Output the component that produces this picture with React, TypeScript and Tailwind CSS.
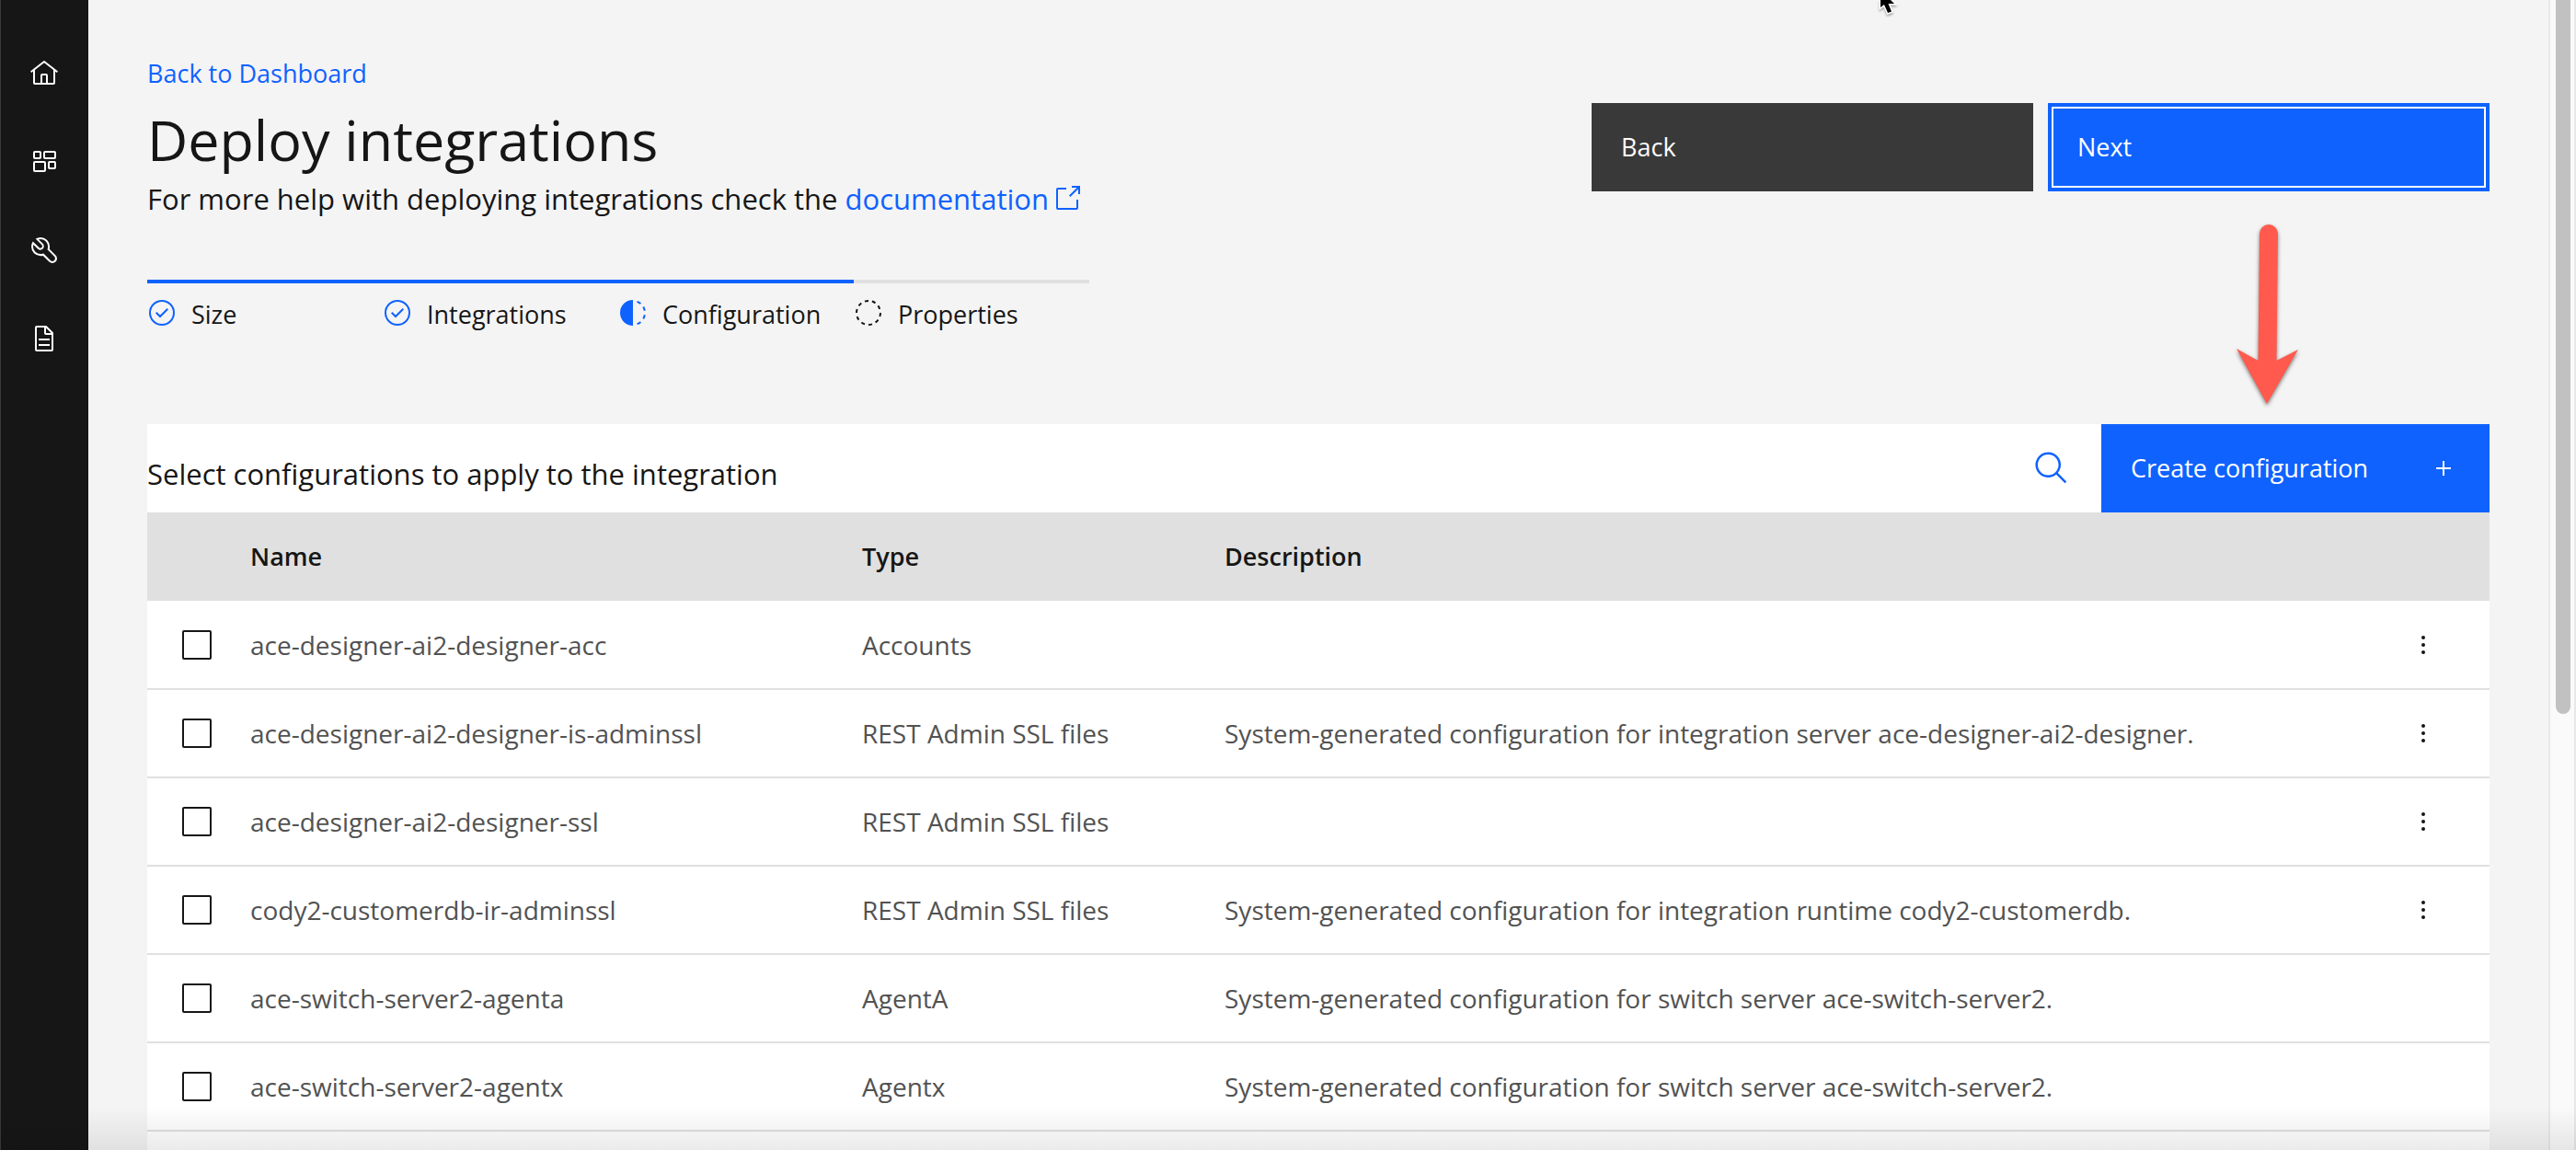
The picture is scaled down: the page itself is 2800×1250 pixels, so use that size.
import React from 'react';

const steps = [
  { label: 'Size', state: 'complete' },
  { label: 'Integrations', state: 'complete' },
  { label: 'Configuration', state: 'current' },
  { label: 'Properties', state: 'todo' },
];

const rows = [
  { name: 'ace-designer-ai2-designer-acc', type: 'Accounts', description: '', menu: true },
  { name: 'ace-designer-ai2-designer-is-adminssl', type: 'REST Admin SSL files', description: 'System-generated configuration for integration server ace-designer-ai2-designer.', menu: true },
  { name: 'ace-designer-ai2-designer-ssl', type: 'REST Admin SSL files', description: '', menu: true },
  { name: 'cody2-customerdb-ir-adminssl', type: 'REST Admin SSL files', description: 'System-generated configuration for integration runtime cody2-customerdb.', menu: true },
  { name: 'ace-switch-server2-agenta', type: 'AgentA', description: 'System-generated configuration for switch server ace-switch-server2.', menu: false },
  { name: 'ace-switch-server2-agentx', type: 'Agentx', description: 'System-generated configuration for switch server ace-switch-server2.', menu: false },
];

const navItems = [
  {
    label: 'Home',
    d: 'M16.612 2.214a1.01 1.01 0 0 0-1.242 0L1 13.419l1.243 1.572L4 13.621V26a2.004 2.004 0 0 0 2 2h20a2.004 2.004 0 0 0 2-2V13.63L29.757 15 31 13.428ZM18 26h-4v-8h4Zm2 0v-8a2.002 2.002 0 0 0-2-2h-4a2.002 2.002 0 0 0-2 2v8H6V12.062l10-7.79 10 7.8V26Z',
  },
  {
    label: 'Dashboard',
    d: 'M11 13H6a2 2 0 0 1-2-2V6a2 2 0 0 1 2-2h5a2 2 0 0 1 2 2v5a2 2 0 0 1-2 2ZM6 6v5h5V6ZM27 13H17a2 2 0 0 1-2-2V6a2 2 0 0 1 2-2h10a2 2 0 0 1 2 2v5a2 2 0 0 1-2 2ZM17 6v5h10V6ZM16 27H6a2 2 0 0 1-2-2v-8a2 2 0 0 1 2-2h10a2 2 0 0 1 2 2v8a2 2 0 0 1-2 2ZM6 17v8h10v-8ZM27 24h-5a2 2 0 0 1-2-2v-5a2 2 0 0 1 2-2h5a2 2 0 0 1 2 2v5a2 2 0 0 1-2 2ZM22 17v5h5v-5Z',
  },
  {
    label: 'Tools',
    d: 'M12.1 2a9.8 9.8 0 0 0-5.4 1.6l6.4 6.4a2.1 2.1 0 0 1 .2 3 2.1 2.1 0 0 1-3-.2L3.7 6.4A9.84 9.84 0 0 0 2 12.1a10.14 10.14 0 0 0 10.1 10.1 10.9 10.9 0 0 0 2.6-.3l6.7 6.7a5 5 0 0 0 7.1-7.1l-6.7-6.7a10.9 10.9 0 0 0 .3-2.6A10 10 0 0 0 12.1 2Zm8 10.1a7.61 7.61 0 0 1-.3 2.1l-.3 1.1.8.8 6.7 6.7a2.88 2.88 0 0 1 .9 2.1A2.72 2.72 0 0 1 27 27a2.9 2.9 0 0 1-4.2 0l-6.7-6.7-.8-.8-1.1.3a7.61 7.61 0 0 1-2.1.3 8.27 8.27 0 0 1-5.7-2.3A7.63 7.63 0 0 1 4 12.1a8.33 8.33 0 0 1 .3-2.2l4.4 4.4a4.14 4.14 0 0 0 5.9.2 4.14 4.14 0 0 0-.2-5.9L10 4.2a6.45 6.45 0 0 1 2-.3 8.27 8.27 0 0 1 5.7 2.3 8.49 8.49 0 0 1 2.4 5.9Z',
  },
  {
    label: 'Documents',
    d: 'M25.7 9.3l-7-7A.908.908 0 0 0 18 2H8a2.006 2.006 0 0 0-2 2v24a2.006 2.006 0 0 0 2 2h16a2.006 2.006 0 0 0 2-2V10a.908.908 0 0 0-.3-.7ZM18 4.4l5.6 5.6H18ZM24 28H8V4h8v6a2.006 2.006 0 0 0 2 2h6ZM10 22h12v2H10ZM10 16h12v2H10Z',
  },
];

function StepIcon({ state }: { state: string }) {
  if (state === 'complete') {
    return (
      <svg viewBox="0 0 32 32" className="size-8 shrink-0 fill-[#0f62fe]" aria-hidden="true">
        <path d="M14 21.414l-5-5.001L10.413 15 14 18.586 21.585 11 23 12.415Z" />
        <path d="M16 2a14 14 0 1 0 14 14A14 14 0 0 0 16 2Zm0 26a12 12 0 1 1 12-12 12 12 0 0 1-12 12Z" />
      </svg>
    );
  }
  if (state === 'current') {
    return (
      <svg viewBox="0 0 32 32" className="size-8 shrink-0 fill-[#0f62fe]" aria-hidden="true">
        <path d="M23.764 6.86l1.286-1.532a13.976 13.976 0 0 0-4.182-2.441l-.683 1.878a11.973 11.973 0 0 1 3.579 2.095ZM27.81 14l1.968-.413a13.889 13.889 0 0 0-1.638-4.541L26.409 10A12.52 12.52 0 0 1 27.81 14ZM20.185 27.235l.683 1.878a13.976 13.976 0 0 0 4.182-2.441l-1.286-1.532a11.973 11.973 0 0 1-3.579 2.095ZM26.409 22l1.731 1a14.14 14.14 0 0 0 1.638-4.587l-1.968-.347A12.152 12.152 0 0 1 26.409 22ZM16 30V2a14 14 0 0 0 0 28Z" />
      </svg>
    );
  }
  return (
    <svg viewBox="0 0 32 32" className="size-8 shrink-0 fill-[#161616]" aria-hidden="true">
      <path d="M7.7 4.7a14.7 14.7 0 0 0-3 3.1L6.3 9a13.26 13.26 0 0 1 2.6-2.7ZM4.6 12.3l-1.9-.6A12.51 12.51 0 0 0 2 16h2a11.48 11.48 0 0 1 .6-3.7ZM2.7 20.4a14.4 14.4 0 0 0 2 3.9l1.6-1.2a12.89 12.89 0 0 1-1.7-3.3ZM7.8 27.3a14.4 14.4 0 0 0 3.9 2l.6-1.9A12.89 12.89 0 0 1 9 25.7ZM11.7 2.7l.6 1.9A11.48 11.48 0 0 1 16 4V2a12.51 12.51 0 0 0-4.3.7ZM24.2 27.3a15.18 15.18 0 0 0 3.1-3.1L25.7 23a11.53 11.53 0 0 1-2.7 2.7ZM27.4 19.7l1.9.6A15.47 15.47 0 0 0 30 16h-2a11.48 11.48 0 0 1-.6 3.7ZM29.2 11.6a14.4 14.4 0 0 0-2-3.9l-1.6 1.2a12.89 12.89 0 0 1 1.7 3.3ZM24.1 4.6a14.4 14.4 0 0 0-3.9-2l-.6 1.9a12.89 12.89 0 0 1 3.3 1.7ZM20.3 29.3l-.6-1.9A11.48 11.48 0 0 1 16 28v2a21.42 21.42 0 0 0 4.3-.7Z" />
    </svg>
  );
}

export default function App() {
  return (
    <div className="relative flex h-screen overflow-hidden bg-[#f4f4f4] font-['Open_Sans','Noto_Sans',sans-serif] text-[27px] leading-9 text-[#161616]">
      <nav className="flex w-24 shrink-0 flex-col bg-[#161616] pt-8 shadow-[inset_1px_0_#393939]">
        {navItems.map((item) => (
          <a key={item.label} href="#" aria-label={item.label} className="flex h-24 items-center justify-center">
            <svg viewBox="0 0 32 32" className="size-8 fill-white" aria-hidden="true">
              <path d={item.d} />
            </svg>
          </a>
        ))}
      </nav>

      <main className="min-w-0 flex-1 px-16 pt-15">
        <header className="flex items-start justify-between">
          <div>
            <a href="#" className="block leading-10 text-[#0f62fe]">Back to Dashboard</a>
            <h1 className="mt-3 text-[61px] leading-20">Deploy integrations</h1>
            <p className="mt-1 text-[31px] leading-10">
              For more help with deploying integrations check the{' '}
              <a href="#" className="inline-flex items-center gap-1 text-[#0f62fe]">
                documentation
                <svg viewBox="0 0 32 32" className="size-8 fill-current" aria-hidden="true">
                  <path d="M26 28H6a2.003 2.003 0 0 1-2-2V6a2.003 2.003 0 0 1 2-2h9v2H6v20h20v-9h2v9a2.003 2.003 0 0 1-2 2Z" />
                  <path d="M21 2v2h5.586L18 12.586 19.414 14 28 5.414V11h2V2Z" />
                </svg>
              </a>
            </p>
          </div>
          <div className="mt-13 flex gap-4">
            <button type="button" className="h-24 w-120 bg-[#393939] px-8 text-left text-white">Back</button>
            <button type="button" className="h-24 w-120 border-4 border-[#0f62fe] bg-[#0f62fe] px-7 text-left text-white inset-ring-2 inset-ring-white">Next</button>
          </div>
        </header>

        <ol className="mt-17 grid w-256 grid-cols-4">
          {steps.map((step) => (
            <li
              key={step.label}
              className={step.state === 'todo' ? 'flex gap-4 border-t-4 border-[#e0e0e0] pt-4' : 'flex gap-4 border-t-4 border-[#0f62fe] pt-4'}
            >
              <StepIcon state={step.state} />
              <span>{step.label}</span>
            </li>
          ))}
        </ol>

        <section className="mt-[101px] bg-white pb-24">
          <div className="flex h-24 items-stretch">
            <h2 className="mt-8 flex-1 text-[31px] leading-11">Select configurations to apply to the integration</h2>
            <button type="button" aria-label="Search" className="flex w-27 items-center justify-center">
              <svg viewBox="0 0 32 32" className="size-10 fill-[#0f62fe]" aria-hidden="true">
                <path d="M29 27.586l-7.552-7.552a11.018 11.018 0 1 0-1.414 1.414L27.586 29ZM4 13a9 9 0 1 1 9 9 9.01 9.01 0 0 1-9-9Z" />
              </svg>
            </button>
            <button type="button" className="flex w-[422px] items-center justify-between bg-[#0f62fe] pr-[34px] pl-8 text-white">
              Create configuration
              <svg viewBox="0 0 32 32" className="size-8 fill-white" aria-hidden="true">
                <path d="M17 15V8h-2v7H8v2h7v7h2v-7h7v-2Z" />
              </svg>
            </button>
          </div>
          <table className="w-full table-fixed border-collapse text-left text-[28px]">
            <colgroup>
              <col className="w-24" />
              <col className="w-[665px]" />
              <col className="w-[394px]" />
              <col />
              <col className="w-36" />
            </colgroup>
            <thead>
              <tr className="h-24 bg-[#e0e0e0] text-[27px]">
                <th aria-label="Select" />
                <th className="px-4 font-semibold">Name</th>
                <th className="px-4 font-semibold">Type</th>
                <th className="px-4 font-semibold">Description</th>
                <th aria-label="Actions" />
              </tr>
            </thead>
            <tbody className="text-[#525252]">
              {rows.map((row) => (
                <tr key={row.name} className="h-24 border-b-2 border-[#e0e0e0]">
                  <td className="pl-[38px]">
                    <input
                      type="checkbox"
                      aria-label={row.name}
                      className="block size-8 appearance-none rounded-xs border-2 border-[#161616] bg-white checked:bg-[#161616]"
                    />
                  </td>
                  <td className="px-4">{row.name}</td>
                  <td className="px-4">{row.type}</td>
                  <td className="px-4">{row.description}</td>
                  <td>
                    {row.menu && (
                      <button type="button" aria-label={`Options for ${row.name}`} className="ml-14 flex size-8 items-center justify-center">
                        <svg viewBox="0 0 32 32" className="size-8 fill-[#161616]" aria-hidden="true">
                          <circle cx="16" cy="8" r="2" />
                          <circle cx="16" cy="16" r="2" />
                          <circle cx="16" cy="24" r="2" />
                        </svg>
                      </button>
                    )}
                  </td>
                </tr>
              ))}
            </tbody>
          </table>
        </section>
      </main>

      <div className="w-[30px] shrink-0 border-x-2 border-[#e8e8e8] bg-[#fafafa] px-1.5">
        <div className="h-[776px] w-4 rounded-b-full bg-[#c1c1c1]" />
      </div>

      <svg viewBox="0 0 80 220" className="pointer-events-none absolute top-[236px] right-[295px] h-[220px] w-20" aria-hidden="true">
        <path
          d="M31 18a10 10 0 0 1 20 0L49.500 156 73 144 39 203 6 143 29.500 156Z"
          fill="#ff5a4d"
          className="drop-shadow-[0_2px_2px_rgba(0,0,0,0.5)]"
        />
      </svg>

      <svg viewBox="0 0 30 24" className="pointer-events-none absolute top-0 left-[2040px] h-6 w-[30px] drop-shadow-[0_2px_1px_rgba(0,0,0,0.3)]" aria-hidden="true">
        <path d="M4-4V8L8 5 12 14 16 12.500 12.500 4H19L11-4Z" fill="#000" stroke="#fff" strokeWidth="3" paintOrder="stroke" />
      </svg>

      <div className="pointer-events-none absolute inset-x-0 bottom-0 h-12 bg-linear-to-b from-transparent to-black/8" />
    </div>
  );
}
